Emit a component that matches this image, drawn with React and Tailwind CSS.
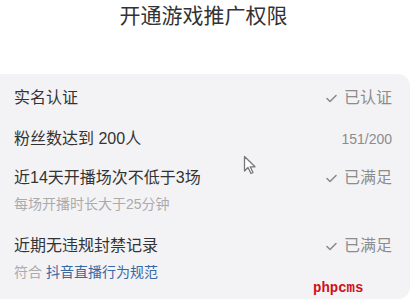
import React from 'react';

const font = { fontFamily: '"Liberation Sans", "Noto Sans CJK SC", sans-serif' };

const Check = () => (
  <svg width="11" height="9" viewBox="0 0 11 9" className="mr-[7px]">
    <path d="M1 4.5 L4 7.5 L10 1.5" fill="none" stroke="#8c8c8c" strokeWidth="1.6" strokeLinecap="round" strokeLinejoin="round" />
  </svg>
);

const Row = ({ title, status, checked, sub, className = '' }) => (
  <div className={`flex flex-col ${className}`}>
    <div className="flex items-center justify-between h-[20px]">
      <span className="text-[16px] leading-[20px] text-[#333]">{title}</span>
      <span className={`flex items-center leading-[20px] text-[#8c8c8c] ${checked ? 'text-[16px]' : 'text-[14px]'}`}>
        {checked && <Check />}
        {status}
      </span>
    </div>
    {sub && <div className="mt-[7px] text-[14px] leading-[18px] text-[#ababab]">{sub}</div>}
  </div>
);

export default function App() {
  return (
    <div className="relative w-[419px] h-[306px] bg-white overflow-hidden" style={font}>
      <div className="h-[74px] flex justify-center pt-[2px] pr-[12px]">
        <h1 className="text-[21px] leading-[28px] text-[#333] font-normal">开通游戏推广权限</h1>
      </div>
      <div className="w-[410px] h-[225px] bg-[#f3f3f5] rounded-r-[12px] pl-[14px] pr-[18px] pt-[14px] flex flex-col">
        <Row title="实名认证" status="已认证" checked />
        <Row className="mt-[21px]" title="粉丝数达到 200人" status="151/200" />
        <Row className="mt-[19px]" title="近14天开播场次不低于3场" status="已满足" checked sub="每场开播时长大于25分钟" />
        <Row
          className="mt-[23px]"
          title="近期无违规封禁记录"
          status="已满足"
          checked
          sub={<>符合 <span className="text-[#3768a6]">抖音直播行为规范</span></>}
        />
      </div>
      {/* mouse cursor */}
      <svg className="absolute left-[243px] top-[155px]" width="14" height="20" viewBox="0 0 14 20">
        <path d="M1.5 1.5 L1.5 16 L5 12.5 L8 18.5 L10 17.5 L7.2 11.8 L12 11.8 Z" fill="#fff" stroke="#777" strokeWidth="1.3" strokeLinejoin="round" />
      </svg>
      {/* watermark */}
      <span
        className="absolute left-[313px] top-[280px] text-[14px] leading-[16px] font-bold text-[#d0101a]"
        style={{ fontFamily: '"Liberation Mono", monospace' }}
      >
        phpcms
      </span>
    </div>
  );
}
